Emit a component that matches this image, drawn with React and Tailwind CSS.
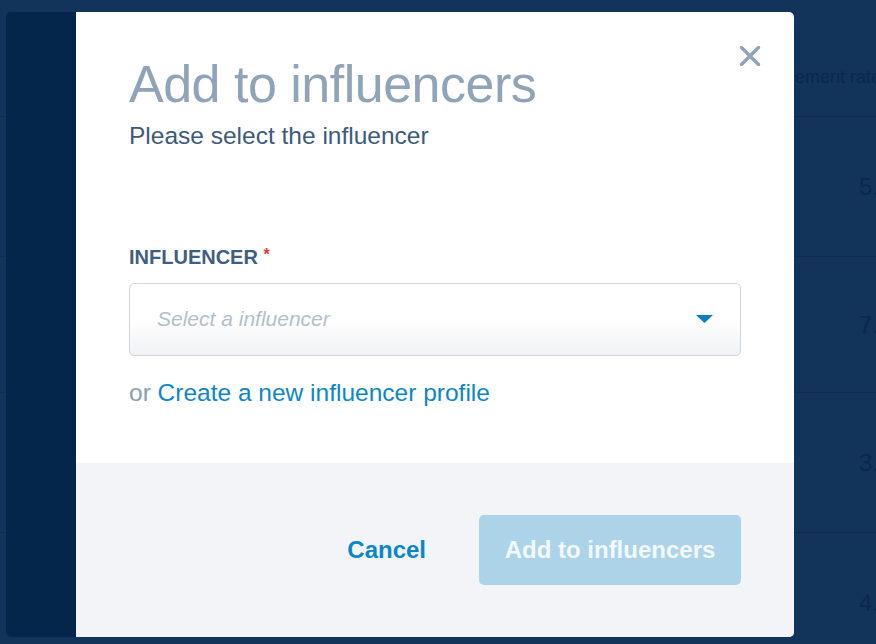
import { useState } from "react";

const rows = [
  { value: "5.12%", h: "h-[140px]" },
  { value: "7.48%", h: "h-[136px]" },
  { value: "3.26%", h: "h-[140px]" },
  { value: "4.05%", h: "h-[140px]" },
];

function CloseIcon() {
  return (
    <svg width="22" height="20" viewBox="0 0 22 20" fill="none">
      <path d="M2.5 1.5L19.5 18.5M19.5 1.5L2.5 18.5" stroke="#8fa3b9" strokeWidth="3.4" strokeLinecap="round" />
    </svg>
  );
}

function App() {
  const [influencer, setInfluencer] = useState("");

  return (
    <div className="relative w-[876px] h-[644px] overflow-hidden bg-[#12335a] font-['Liberation_Sans',Arial,sans-serif]">
      {/* page behind the overlay */}
      <div className="flex flex-col">
        <div className="h-[117px] border-b border-[#0f2d52] pl-[743px] pt-[67px] text-[18px] leading-[21px] text-[#0b284b] whitespace-nowrap">
          Engagement rate
        </div>
        {rows.map((r) => (
          <div key={r.value} className={`${r.h} border-b border-[#0f2d52] flex items-center pl-[859px] text-[24px] text-[#0b284b] whitespace-nowrap`}>
            {r.value}
          </div>
        ))}
      </div>

      {/* modal */}
      <div className="absolute left-[6px] top-[12px] flex h-[625px]">
        <div className="w-[70px] rounded-l-[5px] bg-[#04264a]" />
        <div className="relative w-[718px] flex flex-col rounded-r-[5px] overflow-hidden bg-white">
          <button className="absolute top-[34px] right-[33px]">
            <CloseIcon />
          </button>

          <div className="flex-1 flex flex-col px-[53px] pt-[46px]">
            <h1 className="text-[52px] leading-none tracking-[-0.5px] font-light text-[#8fa3b9]">Add to influencers</h1>
            <p className="mt-[14px] text-[24.5px] leading-none text-[#3b5a7d]">Please select the influencer</p>

            <label className="mt-[98px] text-[20px] leading-none font-semibold text-[#3e5f82]">
              INFLUENCER <span className="text-[#e53935] text-[16px] align-top">*</span>
            </label>

            <div className="mt-[16px] h-[73px] flex items-center justify-between pl-[27px] pr-[27px] rounded-[5px] border border-[#cfd6de] bg-linear-to-b from-white via-white to-[#f1f2f5]">
              <span className={influencer ? "text-[21px] text-[#3b5a7d]" : "text-[21px] italic text-[#b3bfcc]"}>
                {influencer || "Select a influencer"}
              </span>
              <svg width="17" height="8" viewBox="0 0 17 8" onClick={() => setInfluencer("")}>
                <path d="M0 0H17L8.5 8Z" fill="#0b7dc3" />
              </svg>
            </div>

            <p className="mt-[25px] text-[24.5px] leading-none text-[#8a9db3]">
              or <a className="text-[#0b87c9]">Create a new influencer profile</a>
            </p>
          </div>

          <div className="h-[174px] flex items-center justify-end gap-[53px] px-[53px] bg-[#f3f4f8]">
            <button className="text-[24px] font-bold text-[#0b87c9]">Cancel</button>
            <button className="w-[262px] h-[70px] rounded-[5px] bg-[#acd3e8] text-[24px] font-bold text-[#f2f8fc]">
              Add to influencers
            </button>
          </div>
        </div>
      </div>
    </div>
  );
}

export default App;
